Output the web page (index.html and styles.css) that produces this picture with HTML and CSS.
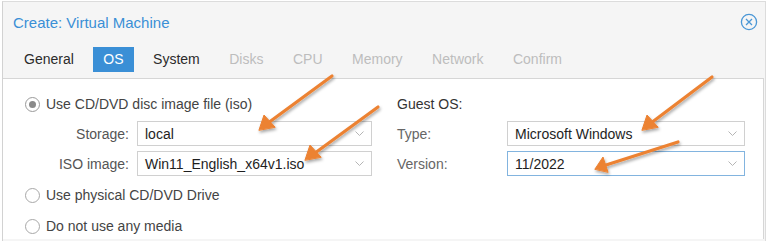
FILE: index.html
```html
<!DOCTYPE html>
<html lang="en">
  <head>
    <meta charset="UTF-8" />
    <title>Create: Virtual Machine</title>
    <link rel="stylesheet" href="styles.css">
  </head>
  <body>
    <div class="window">
      <div class="titlebar">
        <span class="title">Create: Virtual Machine</span>
        <svg class="close" width="18" height="18" viewBox="0 0 18 18">
          <circle cx="9" cy="9" r="7.6" fill="none" stroke="#4a97d6" stroke-width="1.3"/>
          <path d="M6 6 L12 12 M12 6 L6 12" stroke="#4a97d6" stroke-width="1.3" fill="none"/>
        </svg>
      </div>
      <div class="tabs">
        <span class="tab">General</span>
        <span class="tab active">OS</span>
        <span class="tab">System</span>
        <span class="tab disabled">Disks</span>
        <span class="tab disabled">CPU</span>
        <span class="tab disabled">Memory</span>
        <span class="tab disabled">Network</span>
        <span class="tab disabled">Confirm</span>
      </div>
      <div class="panel">
        <div class="col">
          <div class="radio-row first">
            <span class="radio checked"></span>
            <span>Use CD/DVD disc image file (iso)</span>
          </div>
          <div class="field">
            <label class="label-right">Storage:</label>
            <div class="combo">
              <span>local</span>
              <svg class="chev" width="9" height="6" viewBox="0 0 9 6"><polyline points="0.5,0.5 4.5,4.5 8.5,0.5" fill="none" stroke="#b5b5b5" stroke-width="1"/></svg>
            </div>
          </div>
          <div class="field">
            <label class="label-right">ISO image:</label>
            <div class="combo">
              <span>Win11_English_x64v1.iso</span>
              <svg class="chev" width="9" height="6" viewBox="0 0 9 6"><polyline points="0.5,0.5 4.5,4.5 8.5,0.5" fill="none" stroke="#b5b5b5" stroke-width="1"/></svg>
            </div>
          </div>
          <div class="radio-row gap">
            <span class="radio"></span>
            <span>Use physical CD/DVD Drive</span>
          </div>
          <div class="radio-row">
            <span class="radio"></span>
            <span>Do not use any media</span>
          </div>
        </div>
        <div class="col">
          <div class="heading first">Guest OS:</div>
          <div class="field">
            <label class="label-left">Type:</label>
            <div class="combo">
              <span>Microsoft Windows</span>
              <svg class="chev" width="9" height="6" viewBox="0 0 9 6"><polyline points="0.5,0.5 4.5,4.5 8.5,0.5" fill="none" stroke="#b5b5b5" stroke-width="1"/></svg>
            </div>
          </div>
          <div class="field">
            <label class="label-left">Version:</label>
            <div class="combo focus">
              <span>11/2022</span>
              <svg class="chev" width="9" height="6" viewBox="0 0 9 6"><polyline points="0.5,0.5 4.5,4.5 8.5,0.5" fill="none" stroke="#b5b5b5" stroke-width="1"/></svg>
            </div>
          </div>
        </div>
      </div>
    </div>

    <!-- annotation arrows drawn over the dialog -->
    <svg class="arrows" width="768" height="241" viewBox="0 0 768 241">
      <defs>
        <filter id="shade" x="-20%" y="-20%" width="140%" height="140%">
          <feDropShadow dx="1" dy="2" stdDeviation="1.6" flood-color="#000" flood-opacity="0.35"/>
        </filter>
      </defs>
      <g fill="#ec8233" stroke="#ec8233" stroke-width="3.2" stroke-linecap="round" filter="url(#shade)">
        <line x1="332" y1="76" x2="268" y2="123"/>
        <polygon points="259,130 264,115 275,127" stroke-width="1"/>
        <line x1="378" y1="107" x2="315" y2="153"/>
        <polygon points="305,160 310,145 321,157" stroke-width="1"/>
        <line x1="712" y1="77" x2="651" y2="123"/>
        <polygon points="642,130 647,115 658,127" stroke-width="1"/>
        <line x1="678" y1="142" x2="606" y2="165"/>
        <polygon points="595,169 603,157 608,172" stroke-width="1"/>
      </g>
    </svg>
  </body>
</html>
```

FILE: styles.css
```css
body {
  margin: 0;
  font-family: 'Liberation Sans', Arial, sans-serif;
  font-size: 14px;
  color: #333;
  background: #fff;
  position: relative;
  height: 241px;
  overflow: hidden;
}
.window {
  margin: 1px 2px 0 2px;
  border-top: 1px solid #dcdcdc;
  border-left: 1px solid #d2d2d2;
  border-right: 1px solid #dcdcdc;
  background: #f5f5f5;
  height: 239px;
}
.titlebar {
  height: 40px;
  padding: 0 7px 0 10px;
  display: flex;
  align-items: center;
  justify-content: space-between;
}
.title {
  color: #3a8fd6;
  font-size: 15px;
}
.tabs {
  display: flex;
  gap: 9.5px;
  margin-top: 5px;
  padding-left: 11px;
  height: 25px;
  margin-bottom: 6px;
}
.tab {
  padding: 0 10px;
  line-height: 25px;
  color: #2b2b2b;
}
.tab.active {
  background: #3a8fd6;
  color: #fff;
}
.tab.disabled {
  color: #bdbdbd;
}
.panel {
  background: #fff;
  border-top: 1px solid #d6d6d6;
  border-right: 1px solid #d6d6d6;
  margin-right: 1px;
  height: 160px;
  padding: 0 17px 0 22px;
  display: grid;
  grid-template-columns: 347px 348px;
  column-gap: 25px;
  align-content: start;
}
.col {
  display: flex;
  flex-direction: column;
}
.radio-row {
  display: flex;
  align-items: center;
  height: 26px;
  color: #444;
  margin-top: 5px;
}
.radio-row.first,
.heading.first {
  margin-top: 12px;
}
.radio-row.gap {
  margin-top: 6px;
}
.radio {
  width: 13px;
  height: 13px;
  border: 1px solid #a8a8a8;
  border-radius: 50%;
  margin-right: 6px;
  display: inline-block;
  background: #fff;
  position: relative;
}
.radio.checked {
  border-color: #9a9a9a;
}
.radio.checked::after {
  content: "";
  position: absolute;
  left: 3px;
  top: 3px;
  width: 7px;
  height: 7px;
  border-radius: 50%;
  background: #8a8a8a;
}
.heading {
  height: 26px;
  line-height: 26px;
  color: #333;
}
.field {
  display: flex;
  align-items: center;
  margin-top: 4px;
}
.field + .field {
  margin-top: 5px;
}
.label-right {
  width: 104px;
  padding-right: 8px;
  text-align: right;
  color: #555;
}
.label-left {
  width: 110px;
  color: #666;
}
.combo {
  flex: 1;
  height: 23px;
  border: 1px solid #d0d0d0;
  display: flex;
  align-items: center;
  justify-content: space-between;
  padding: 0 7px 0 7px;
  color: #1e1e1e;
}
.combo.focus {
  border-color: #82b4df;
}
.chev {
  margin-top: 1px;
}
.arrows {
  position: absolute;
  left: 0;
  top: 0;
  pointer-events: none;
}
```
